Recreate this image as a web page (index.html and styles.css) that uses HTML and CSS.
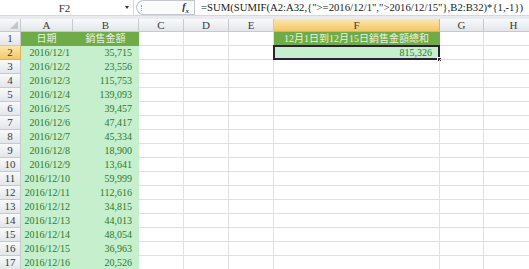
FILE: index.html
```html
<!DOCTYPE html>
<html lang="zh-Hant">
<head>
    <meta charset="UTF-8">
    <title>Book1</title>
    <link rel="stylesheet" href="styles.css">
</head>
<body>
    <div class="fbar">
        <div class="namebox"><span class="ref">F2</span><span class="drop"></span></div>
        <div class="pill"><span class="grip"></span><span class="fx">f<sub>x</sub></span></div>
        <div class="formula">=SUM(SUMIF(A2:A32,{"&gt;=2016/12/1","&gt;2016/12/15"},B2:B32)*{1,-1})</div>
    </div>
    <div class="band"></div>

    <div class="sheet">
        <!-- column headers -->
        <div class="corner"><span class="tri"></span></div>
        <div class="ch">A</div>
        <div class="ch">B</div>
        <div class="ch">C</div>
        <div class="ch">D</div>
        <div class="ch">E</div>
        <div class="ch sel">F</div>
        <div class="ch">G</div>
        <div class="ch">H</div>

        <!-- row 1 -->
        <div class="rh">1</div>
        <div class="c head center">日期</div>
        <div class="c head center">銷售金額</div>
        <div class="c"></div><div class="c"></div><div class="c"></div>
        <div class="c head center">12月1日到12月15日銷售金額總和</div>
        <div class="c"></div><div class="c"></div>

        <!-- row 2 -->
        <div class="rh sel">2</div>
        <div class="c good">2016/12/1</div>
        <div class="c good num">35,715</div>
        <div class="c"></div><div class="c"></div><div class="c"></div>
        <div class="c good active">815,326<span class="handle"></span></div>
        <div class="c"></div><div class="c"></div>

        <div class="rh">3</div>
        <div class="c good">2016/12/2</div><div class="c good num">23,556</div>
        <div class="c"></div><div class="c"></div><div class="c"></div><div class="c"></div><div class="c"></div><div class="c"></div>

        <div class="rh">4</div>
        <div class="c good">2016/12/3</div><div class="c good num">115,753</div>
        <div class="c"></div><div class="c"></div><div class="c"></div><div class="c"></div><div class="c"></div><div class="c"></div>

        <div class="rh">5</div>
        <div class="c good">2016/12/4</div><div class="c good num">139,093</div>
        <div class="c"></div><div class="c"></div><div class="c"></div><div class="c"></div><div class="c"></div><div class="c"></div>

        <div class="rh">6</div>
        <div class="c good">2016/12/5</div><div class="c good num">39,457</div>
        <div class="c"></div><div class="c"></div><div class="c"></div><div class="c"></div><div class="c"></div><div class="c"></div>

        <div class="rh">7</div>
        <div class="c good">2016/12/6</div><div class="c good num">47,417</div>
        <div class="c"></div><div class="c"></div><div class="c"></div><div class="c"></div><div class="c"></div><div class="c"></div>

        <div class="rh">8</div>
        <div class="c good">2016/12/7</div><div class="c good num">45,334</div>
        <div class="c"></div><div class="c"></div><div class="c"></div><div class="c"></div><div class="c"></div><div class="c"></div>

        <div class="rh">9</div>
        <div class="c good">2016/12/8</div><div class="c good num">18,900</div>
        <div class="c"></div><div class="c"></div><div class="c"></div><div class="c"></div><div class="c"></div><div class="c"></div>

        <div class="rh">10</div>
        <div class="c good">2016/12/9</div><div class="c good num">13,641</div>
        <div class="c"></div><div class="c"></div><div class="c"></div><div class="c"></div><div class="c"></div><div class="c"></div>

        <div class="rh">11</div>
        <div class="c good">2016/12/10</div><div class="c good num">59,999</div>
        <div class="c"></div><div class="c"></div><div class="c"></div><div class="c"></div><div class="c"></div><div class="c"></div>

        <div class="rh">12</div>
        <div class="c good">2016/12/11</div><div class="c good num">112,616</div>
        <div class="c"></div><div class="c"></div><div class="c"></div><div class="c"></div><div class="c"></div><div class="c"></div>

        <div class="rh">13</div>
        <div class="c good">2016/12/12</div><div class="c good num">34,815</div>
        <div class="c"></div><div class="c"></div><div class="c"></div><div class="c"></div><div class="c"></div><div class="c"></div>

        <div class="rh">14</div>
        <div class="c good">2016/12/13</div><div class="c good num">44,013</div>
        <div class="c"></div><div class="c"></div><div class="c"></div><div class="c"></div><div class="c"></div><div class="c"></div>

        <div class="rh">15</div>
        <div class="c good">2016/12/14</div><div class="c good num">48,054</div>
        <div class="c"></div><div class="c"></div><div class="c"></div><div class="c"></div><div class="c"></div><div class="c"></div>

        <div class="rh">16</div>
        <div class="c good">2016/12/15</div><div class="c good num">36,963</div>
        <div class="c"></div><div class="c"></div><div class="c"></div><div class="c"></div><div class="c"></div><div class="c"></div>

        <div class="rh">17</div>
        <div class="c good">2016/12/16</div><div class="c good num">20,526</div>
        <div class="c"></div><div class="c"></div><div class="c"></div><div class="c"></div><div class="c"></div><div class="c"></div>
    </div>
</body>
</html>
```

FILE: styles.css
```css
body {
    margin: 0;
    background: #fff;
    font-family: "Liberation Serif", "Noto Sans CJK TC", serif;
    font-size: 11px;
    color: #333;
    overflow: hidden;
}

/* formula bar */
.fbar {
    display: flex;
    height: 16px;
    background: #fff;
    border-bottom: 1px solid #d5d8dc;
    box-sizing: border-box;
}
.namebox {
    width: 133px;
    display: flex;
    align-items: center;
    border-right: 1px solid #d5d8dc;
}
.namebox .ref {
    flex: 1;
    text-align: center;
    padding-left: 4px;
}
.namebox .drop {
    width: 0;
    height: 0;
    border-left: 2.5px solid transparent;
    border-right: 2.5px solid transparent;
    border-top: 3px solid #333;
    margin-right: 4px;
}
.pill {
    width: 58px;
    margin-left: 2px;
    display: flex;
    align-items: center;
    justify-content: space-between;
    border: 1px solid #c3c7cc;
    border-right: none;
    border-radius: 8px 0 0 8px;
    box-sizing: border-box;
    background: #fafbfc;
}
.grip {
    width: 2px;
    height: 6px;
    margin-left: 4px;
    border-left: 1px dotted #9aa0a6;
}
.fx {
    font-style: italic;
    font-weight: bold;
    font-size: 10px;
    margin-right: 5px;
    color: #333;
}
.fx sub {
    font-size: 7px;
}
.formula {
    flex: 1;
    border-left: 1px solid #c3c7cc;
    padding-left: 6px;
    line-height: 15px;
    white-space: nowrap;
    color: #222;
    font-size: 10.7px;
}
.band {
    height: 3px;
    background: #e9ebee;
}

/* grid */
.sheet {
    display: grid;
    grid-template-columns: 21px 52px 66px 45px 45px 45px 166px 44px 60px;
    grid-template-rows: 13px;
    grid-auto-rows: 14px;
}
.corner,
.ch,
.rh {
    background: linear-gradient(#f8f9fa, #e3e6ea);
    border-right: 1px solid #c6cad0;
    border-bottom: 1px solid #c6cad0;
    box-sizing: border-box;
    color: #3c3c3c;
    text-align: center;
    line-height: 12px;
}
.corner {
    position: relative;
}
.tri {
    position: absolute;
    right: 2px;
    bottom: 2px;
    width: 0;
    height: 0;
    border-left: 8px solid transparent;
    border-bottom: 8px solid #c2c6cc;
}
.rh {
    line-height: 13px;
}
.ch.sel,
.rh.sel {
    background: linear-gradient(#fbe7b0, #f4c766);
    border-color: #e2b24f;
}
.c {
    border-right: 1px solid #dde0e4;
    border-bottom: 1px solid #dde0e4;
    box-sizing: border-box;
    line-height: 13px;
    font-size: 10px;
    text-align: right;
    padding-right: 2px;
    white-space: nowrap;
    position: relative;
}
.c.head {
    background: #6fab47;
    border-color: #6fab47;
    color: #e8f2df;
}
.c.center {
    text-align: center;
    padding-right: 0;
}
.c.good {
    background: #c6efce;
    border-color: #c6efce;
    color: #2a7a2a;
}
.c.num {
    padding-right: 6px;
}
.c.active {
    border: 2px solid #2e1f38;
    margin-top: -1px;
    margin-left: -1px;
    line-height: 11px;
    padding-right: 6px;
}
.handle {
    position: absolute;
    right: -4px;
    bottom: -4px;
    width: 5px;
    height: 5px;
    background: #2e1f38;
    border: 1px solid #fff;
    box-sizing: border-box;
}
```
